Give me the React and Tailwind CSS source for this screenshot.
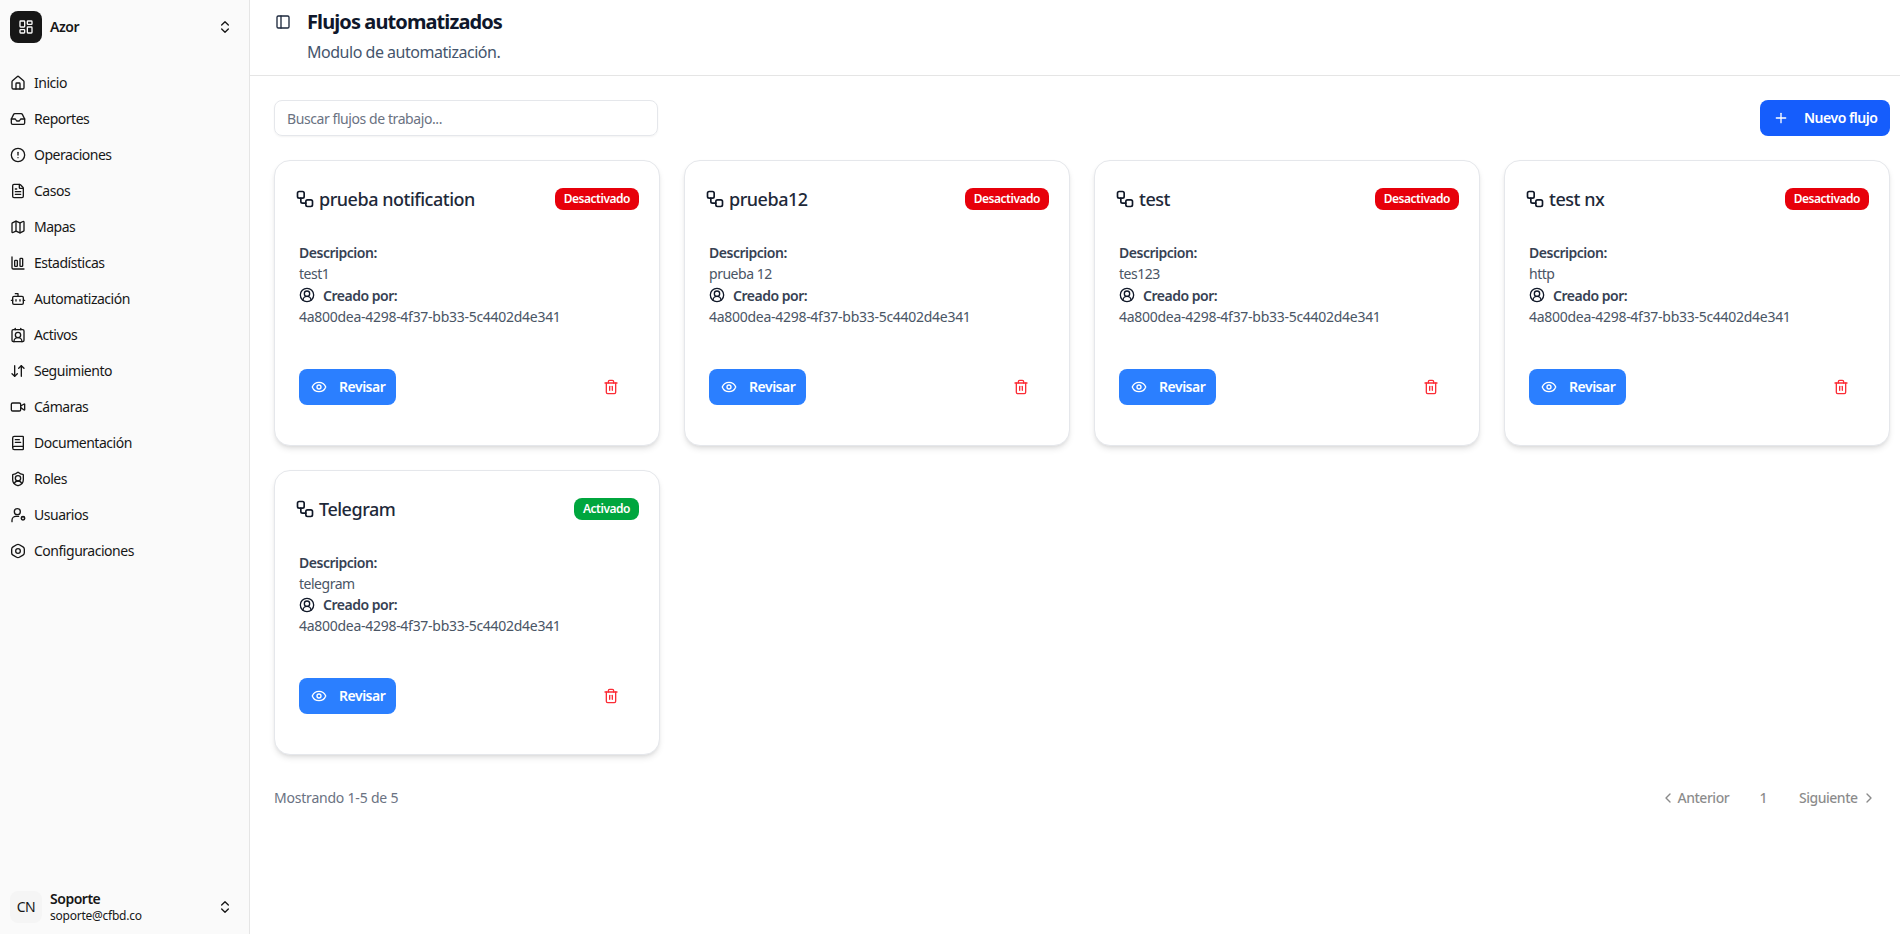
import {
  House,
  Inbox,
  CircleAlert,
  FileText,
  Map,
  ChartColumnBig,
  Bot,
  ContactRound,
  ArrowDownUp,
  Video,
  BookText,
  ShieldUser,
  LayoutDashboard,
  ChevronsUpDown,
  PanelLeft,
  Workflow,
  CircleUserRound,
  Eye,
  Trash2,
  Plus,
  ChevronLeft,
  ChevronRight,
} from "lucide-react";

function HexCog({ className }) {
  return (
    <svg xmlns="http://www.w3.org/2000/svg" viewBox="0 0 24 24" fill="none" stroke="currentColor" strokeWidth="2" strokeLinecap="round" strokeLinejoin="round" className={className}>
      <path d="M10 2.6a4 4 0 0 1 4 0l5.5 3.2a4 4 0 0 1 2 3.4v5.6a4 4 0 0 1-2 3.4L14 21.4a4 4 0 0 1-4 0l-5.5-3.2a4 4 0 0 1-2-3.4V9.2a4 4 0 0 1 2-3.4z" />
      <circle cx="12" cy="12" r="3.5" />
    </svg>
  );
}

function UserDot({ className }) {
  return (
    <svg xmlns="http://www.w3.org/2000/svg" viewBox="0 0 24 24" fill="none" stroke="currentColor" strokeWidth="2" strokeLinecap="round" strokeLinejoin="round" className={className}>
      <circle cx="11" cy="7" r="4.5" />
      <path d="M3 22v-2a6 6 0 0 1 6-6h4" />
      <circle cx="19.5" cy="17" r="2.5" strokeWidth="2.4" />
    </svg>
  );
}

const nav = [
  ["Inicio", House],
  ["Reportes", Inbox],
  ["Operaciones", CircleAlert],
  ["Casos", FileText],
  ["Mapas", Map],
  ["Estadísticas", ChartColumnBig],
  ["Automatización", Bot],
  ["Activos", ContactRound],
  ["Seguimiento", ArrowDownUp],
  ["Cámaras", Video],
  ["Documentación", BookText],
  ["Roles", ShieldUser],
  ["Usuarios", UserDot],
  ["Configuraciones", HexCog],
];

const flows = [
  { name: "prueba notification", desc: "test1", active: false },
  { name: "prueba12", desc: "prueba 12", active: false },
  { name: "test", desc: "tes123", active: false },
  { name: "test nx", desc: "http", active: false },
  { name: "Telegram", desc: "telegram", active: true },
];

function Sidebar() {
  return (
    <aside className="flex w-[250px] shrink-0 flex-col border-r border-neutral-200 bg-neutral-50 text-neutral-900">
      <div className="flex items-center gap-2 pl-2.5 pr-4 pt-[11px]">
        <div className="flex h-8 w-8 items-center justify-center rounded-lg bg-neutral-900 text-neutral-50">
          <LayoutDashboard className="h-4 w-4" />
        </div>
        <span className="flex-1 text-sm font-semibold">Azor</span>
        <ChevronsUpDown className="h-4 w-4" />
      </div>
      <nav className="mt-[22px] flex flex-col">
        {nav.map(([label, Icon]) => (
          <a key={label} className="flex h-9 items-center gap-2 pl-2.5 text-sm">
            <Icon className="h-4 w-4 shrink-0" />
            {label}
          </a>
        ))}
      </nav>
      <div className="mt-auto flex items-center gap-2 pb-2.5 pl-2.5 pr-4">
        <div className="flex h-8 w-8 items-center justify-center rounded-lg bg-neutral-100 text-sm">CN</div>
        <div className="flex-1 leading-tight">
          <p className="text-sm font-semibold leading-[18px]">Soporte</p>
          <p className="text-xs leading-4 tracking-[-0.02em]">soporte@cfbd.co</p>
        </div>
        <ChevronsUpDown className="h-4 w-4" />
      </div>
    </aside>
  );
}

function FlowCard({ flow }) {
  return (
    <div className="flex h-[285.5px] flex-col rounded-2xl border border-gray-200 bg-white px-6 pb-[39.75px] pt-[24px] shadow-md">
      <div className="-ml-[4px] -mr-[4px] flex items-center">
        <Workflow className="h-5 w-5 shrink-0 text-gray-900" />
        <span className="ml-[4px] flex-1 text-lg font-medium text-gray-800">{flow.name}</span>
        <span
          className={
            flow.active
              ? "rounded-lg bg-green-600 px-[9px] py-[3px] text-xs font-semibold text-white"
              : "rounded-lg bg-red-600 px-[9px] py-[3px] text-xs font-semibold text-white"
          }
        >
          {flow.active ? "Activado" : "Desactivado"}
        </span>
      </div>
      <div className="mt-[29px] text-sm leading-[21.33px] text-gray-600">
        <p className="font-semibold text-gray-700">Descripcion:</p>
        <p>{flow.desc}</p>
        <p className="flex items-center gap-2 font-semibold text-gray-700">
          <CircleUserRound className="h-4 w-4 text-gray-900" />
          Creado por:
        </p>
        <p className="tracking-[-0.02em]">4a800dea-4298-4f37-bb33-5c4402d4e341</p>
      </div>
      <div className="mt-auto flex items-center justify-between">
        <button className="flex h-9 w-[97px] items-center gap-3 rounded-lg bg-blue-500 pl-3 text-sm font-semibold text-white">
          <Eye className="h-4 w-4" />
          Revisar
        </button>
        <button className="mr-[16px] text-red-500">
          <Trash2 className="h-4 w-4" />
        </button>
      </div>
    </div>
  );
}

export default function App() {
  return (
    <div className="flex h-screen overflow-hidden bg-white font-['Noto_Sans',sans-serif] tracking-[-0.03em]">
      <Sidebar />
      <main className="flex min-w-0 flex-1 flex-col">
        <header className="h-[76px] shrink-0 border-b border-neutral-200 pl-[25px] pt-[8px]">
          <div className="flex items-center gap-4">
            <PanelLeft className="h-4 w-4 text-slate-800" />
            <h1 className="text-xl font-bold tracking-[-0.045em] text-slate-900">Flujos automatizados</h1>
          </div>
          <p className="ml-8 mt-[4px] text-base text-slate-600">Modulo de automatización.</p>
        </header>
        <div className="flex flex-col pl-6 pr-2.5 pt-6">
          <div className="flex items-center justify-between">
            <input
              placeholder="Buscar flujos de trabajo..."
              className="h-9 w-[384px] rounded-lg border border-gray-200 px-3 text-sm tracking-[-0.03em] shadow-xs outline-none placeholder:text-gray-500"
            />
            <button className="flex h-9 w-[130px] items-center rounded-lg bg-blue-600 pl-[13px] text-sm font-semibold text-white">
              <Plus className="h-4 w-4" />
              <span className="ml-[15px]">Nuevo flujo</span>
            </button>
          </div>
          <div className="mt-6 grid grid-cols-4 gap-6">
            {flows.map((flow) => (
              <FlowCard key={flow.name} flow={flow} />
            ))}
          </div>
          <div className="mt-[33px] flex items-center justify-between text-sm">
            <span className="tracking-[-0.015em] text-gray-500">Mostrando 1-5 de 5</span>
            <div className="mr-[13px] flex items-center font-medium text-neutral-900 opacity-50">
              <ChevronLeft className="h-4 w-4" />
              <span className="ml-px w-[52px]">Anterior</span>
              <span className="ml-[30px]">1</span>
              <span className="ml-[32px] w-[58px]">Siguiente</span>
              <ChevronRight className="ml-1 h-4 w-4" />
            </div>
          </div>
        </div>
      </main>
    </div>
  );
}
